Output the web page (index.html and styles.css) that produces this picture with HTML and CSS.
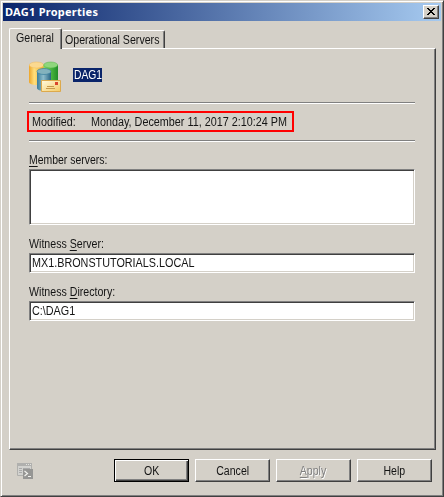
FILE: index.html
```html
<!DOCTYPE html>
<html lang="en">
<head>
<meta charset="utf-8">
<title>DAG1 Properties</title>
<link rel="stylesheet" href="styles.css">
</head>
<body>
<div class="window">
  <header class="titlebar">
    <span class="title">DAG1 Properties</span>
    <button class="close" aria-label="Close"><svg width="8" height="7" viewBox="0 0 8 7" shape-rendering="crispEdges"><path d="M0 0h2v1h1v1h2v-1h1v-1h2v1h-1v1h-1v1h-1v1h1v1h1v1h1v1h-2v-1h-1v-1h-2v1h-1v1h-2v-1h1v-1h1v-1h1v-1h-1v-1h-1v-1h-1z"/></svg></button>
  </header>
  <nav class="tabs">
    <div class="tab active"><span class="text t-general">General</span></div>
    <div class="tab"><span class="text t-oper">Operational Servers</span></div>
  </nav>
  <main class="pane">
    <div class="identity">
      <svg width="33" height="32" viewBox="0 0 33 32">
        <defs>
          <linearGradient id="gold"><stop offset="0" stop-color="#eda52a"/><stop offset=".35" stop-color="#ffdf7c"/><stop offset="1" stop-color="#eda82c"/></linearGradient>
          <linearGradient id="green"><stop offset="0" stop-color="#8edb68"/><stop offset=".5" stop-color="#4cb840"/><stop offset="1" stop-color="#218d28"/></linearGradient>
          <linearGradient id="blue"><stop offset="0" stop-color="#3a7d9c"/><stop offset=".45" stop-color="#8dbccb"/><stop offset="1" stop-color="#286484"/></linearGradient>
          <linearGradient id="mail" x2="1" y2="1"><stop offset="0" stop-color="#fffbe0"/><stop offset="1" stop-color="#f4ca63"/></linearGradient>
        </defs>
        <path d="M0 4v17c0 4 15 4 15 0V4" fill="url(#gold)"/>
        <ellipse cx="7.500" cy="4" rx="7.300" ry="3" fill="#fbd990" stroke="#f0bb5c" stroke-width=".5"/>
        <path d="M14.500 4v17c0 4 14.500 4 14.500 0V4" fill="url(#green)"/>
        <ellipse cx="21.700" cy="4" rx="7" ry="3" fill="#8fd67c" stroke="#53b547" stroke-width=".5"/>
        <path d="M8 11v16c0 4 14 4 14 0V11" fill="url(#blue)"/>
        <ellipse cx="15" cy="10.500" rx="7" ry="3" fill="#83b2bd" stroke="#397f9d" stroke-width=".7"/>
        <path d="M12.500 19.500h19v11h-19z" fill="url(#mail)" stroke="#dca94c"/>
        <path d="M26 21h3v3h-3z" fill="#d9452c"/>
        <path d="M18 25.500h7M17 27.500h9" stroke="#c79a4c"/>
      </svg>
      <span class="name"><span class="text t-name">DAG1</span></span>
    </div>
    <hr class="rule">
    <div class="modified"><span class="mod-label"><span class="text t-mod">Modified:</span></span><span class="text t-date">Monday, December 11, 2017 2:10:24 PM</span></div>
    <hr class="rule second">
    <label class="label"><span class="text l-member"><u>M</u>ember servers:</span></label>
    <div class="field list"></div>
    <label class="label"><span class="text l-server">Witness <u>S</u>erver:</span></label>
    <div class="field"><span class="text v-server">MX1.BRONSTUTORIALS.LOCAL</span></div>
    <label class="label"><span class="text l-dir">Witness <u>D</u>irectory:</span></label>
    <div class="field"><span class="text v-dir">C:\DAG1</span></div>
  </main>
  <footer class="actions">
    <svg class="script" width="16" height="16" viewBox="0 0 16 16">
      <path d="M.5.500h14v12H.5z" fill="#d2d2cf" stroke="#b0b0ad"/>
      <path d="M0 0h15v3H0z" fill="#b0b0ae"/>
      <path d="M9 1.500h1m1 0h1m1 0h1" stroke="#e4e4e0"/>
      <path d="M2 5.500h3m1 0h7M2 7.500h3M2 9.500h3" stroke="#aaa"/>
      <path d="M6 6h10v10H6z" fill="#969694"/>
      <path d="M7.500 8l3 2.500-3 2.500M11 13.500h3" fill="none" stroke="#f2f2ee" stroke-width="1.200"/>
    </svg>
    <button class="btn default"><span class="text b-text">OK</span></button>
    <button class="btn"><span class="text b-text">Cancel</span></button>
    <button class="btn disabled"><span class="text b-text"><u>A</u>pply</span></button>
    <button class="btn"><span class="text b-text">Help</span></button>
  </footer>
</div>
</body>
</html>
```
FILE: styles.css
```css
* { box-sizing: border-box; }
body {
  margin: 0;
  font: 12px/14px "Liberation Sans", Arial, sans-serif;
  color: #141414;
}
.window {
  width: 444px;
  height: 497px;
  padding: 1px;
  background: #d4d0c8;
  border: 1px solid;
  border-color: #d4d0c8 #404040 #404040 #d4d0c8;
  box-shadow: inset 1px 1px #fff, inset -1px -1px #808080;
}
.titlebar {
  display: flex;
  align-items: center;
  justify-content: space-between;
  height: 18px;
  margin: 1px 1px 0;
  padding: 0 2px;
  background: linear-gradient(90deg, #0a246a, #a6caf0);
}
.title {
  font: bold 11px/18px "Noto Sans", "Open Sans", sans-serif;
  letter-spacing: 0.26px;
  color: #fff;
  white-space: nowrap;
}
.close {
  display: flex;
  width: 16px;
  height: 14px;
  padding: 2px 0 0 3px;
  background: #d4d0c8;
  border: 1px solid;
  border-color: #fff #404040 #404040 #fff;
  box-shadow: inset -1px -1px #808080;
}
.tabs {
  display: flex;
  align-items: flex-end;
  height: 27px;
  margin-left: 7px;
}
.tab {
  width: 103px;
  height: 18px;
  padding: 2px 0 0 3px;
  border: solid;
  border-width: 1px 1px 0 0;
  border-color: #fff #404040;
  border-radius: 2px 2px 0 0;
  box-shadow: inset -1px 0 #808080;
  white-space: nowrap;
}
.tab.active {
  position: relative;
  width: 53px;
  height: 21px;
  margin-bottom: -1px;
  padding: 2px 0 0 6px;
  background: #d4d0c8;
  border-left: 1px solid #fff;
}
.pane {
  width: 427px;
  height: 402px;
  margin-left: 7px;
  padding: 12px 20px 0 19px;
  border: 1px solid;
  border-color: #fff #404040 #404040 #fff;
  box-shadow: inset -1px -1px #808080;
}
.identity {
  display: flex;
  align-items: flex-start;
  gap: 11px;
  height: 41px;
}
.name {
  width: 29px;
  height: 14px;
  margin-top: 7px;
  padding-left: 1px;
  color: #fff;
  background: #0a246a;
}
.rule {
  height: 2px;
  margin: 0;
  border: solid;
  border-width: 1px 0;
  border-color: #808080 transparent #fff;
}
.modified {
  display: flex;
  width: 267px;
  height: 21px;
  margin: 7px 0 8px -2px;
  padding: 2px 0 0 3px;
  border: 2px solid #f00;
}
.mod-label {
  flex: none;
  width: 59px;
}
.second { margin-bottom: 11px; }
.label {
  display: block;
  height: 16px;
}
u {
  text-decoration-thickness: 1px;
  text-underline-offset: 2px;
}
.field {
  height: 20px;
  margin-bottom: 12px;
  padding: 2px 0 0 2px;
  background: #fff;
  border: 1px solid;
  border-color: #808080 #fff #fff #808080;
  box-shadow: inset 1px 1px #404040, inset -1px -1px #d4d0c8;
}
.list { height: 56px; }
.actions {
  display: flex;
  gap: 6px;
  margin: 9px 0 0 15px;
}
.script { margin: 4px 75px 0 0; }
.btn {
  width: 75px;
  height: 23px;
  padding: 0;
  font: inherit;
  color: #141414;
  background: #d4d0c8;
  border: 1px solid;
  border-color: #fff #404040 #404040 #fff;
  box-shadow: inset -1px -1px #808080;
}
.default {
  border-color: #000;
  box-shadow: inset 1px 1px #fff, inset -1px -1px #404040, inset -2px -2px #808080;
}
.disabled { color: #808080; text-shadow: 1px 1px #fff; }

/* Condensed interface lettering */
.text {
  display: inline-block;
  white-space: nowrap;
  transform: scaleX(0.9);
  transform-origin: left center;
}
.t-general, .t-oper, .l-server, .l-dir { transform: scaleX(0.885); }
.t-name { transform: scaleX(0.86); }
.l-member { transform: scaleX(0.87); }
.b-text { transform: scaleX(0.88); transform-origin: center; }
```
